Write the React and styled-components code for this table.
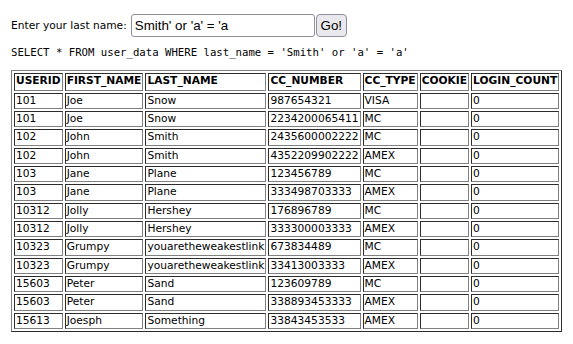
import styled, { createGlobalStyle } from "styled-components";

const GlobalStyle = createGlobalStyle`
  body {
    margin: 0;
    background: #ffffff;
    color: #000000;
    font-family: "DejaVu Sans", sans-serif;
  }
`;

const rows = [
  ["101", "Joe", "Snow", "987654321", "VISA", "", "0"],
  ["101", "Joe", "Snow", "2234200065411", "MC", "", "0"],
  ["102", "John", "Smith", "2435600002222", "MC", "", "0"],
  ["102", "John", "Smith", "4352209902222", "AMEX", "", "0"],
  ["103", "Jane", "Plane", "123456789", "MC", "", "0"],
  ["103", "Jane", "Plane", "333498703333", "AMEX", "", "0"],
  ["10312", "Jolly", "Hershey", "176896789", "MC", "", "0"],
  ["10312", "Jolly", "Hershey", "333300003333", "AMEX", "", "0"],
  ["10323", "Grumpy", "youaretheweakestlink", "673834489", "MC", "", "0"],
  ["10323", "Grumpy", "youaretheweakestlink", "33413003333", "AMEX", "", "0"],
  ["15603", "Peter", "Sand", "123609789", "MC", "", "0"],
  ["15603", "Peter", "Sand", "338893453333", "AMEX", "", "0"],
  ["15613", "Joesph", "Something", "33843453533", "AMEX", "", "0"],
];

const columns = [
  "USERID",
  "FIRST_NAME",
  "LAST_NAME",
  "CC_NUMBER",
  "CC_TYPE",
  "COOKIE",
  "LOGIN_COUNT",
];

function App() {
  return (
    <Page>
      <GlobalStyle />
      <SearchForm onSubmit={(e) => e.preventDefault()}>
        <Label>Enter your last name:</Label>
        <NameInput type="text" defaultValue="Smith' or 'a' = 'a" />
        <GoButton type="submit">Go!</GoButton>
      </SearchForm>
      <Query>SELECT * FROM user_data WHERE last_name = 'Smith' or 'a' = 'a'</Query>
      <ResultTable>
        <tbody>
          <tr>
            {columns.map((c) => (
              <HeadCell key={c}>{c}</HeadCell>
            ))}
          </tr>
          {rows.map((r, i) => (
            <tr key={i}>
              {r.map((v, j) => (
                <Cell key={j}>{v}</Cell>
              ))}
            </tr>
          ))}
        </tbody>
      </ResultTable>
    </Page>
  );
}

const Page = styled.div`
  padding: 14px 11px;
`;

const SearchForm = styled.form`
  display: flex;
  align-items: center;
  margin: 0;
`;

const Label = styled.span`
  font-size: 8pt;
  margin-right: 4px;
`;

const NameInput = styled.input`
  width: 184px;
  height: 23px;
  box-sizing: border-box;
  padding: 0 3px;
  border: 1px solid #8f8f9d;
  border-radius: 3px;
  font-family: "Liberation Sans", Arial, sans-serif;
  font-size: 13.33px;
  color: #000;
`;

const GoButton = styled.button`
  width: 31px;
  height: 23px;
  box-sizing: border-box;
  margin-left: 1px;
  padding: 0;
  border: 1px solid #8f8f9d;
  border-radius: 4px;
  background: #e9e9ed;
  font-family: "Liberation Sans", Arial, sans-serif;
  font-size: 13.33px;
  color: #000;
`;

const Query = styled.div`
  font-family: "DejaVu Sans Mono", monospace;
  font-size: 8pt;
  line-height: 12.4px;
  margin: 10px 0 11px;
`;

const ResultTable = styled.table`
  border: 1px outset #808080;
  border-spacing: 2px;
  font-size: 8pt;
  line-height: 12.33px;
`;

const Cell = styled.td`
  border: 1px inset #808080;
  padding: 1px;
  text-align: left;
`;

const HeadCell = styled(Cell).attrs({ as: "th" })`
  font-weight: bold;
  padding: 1px 1px 2px;
`;

export default App;
